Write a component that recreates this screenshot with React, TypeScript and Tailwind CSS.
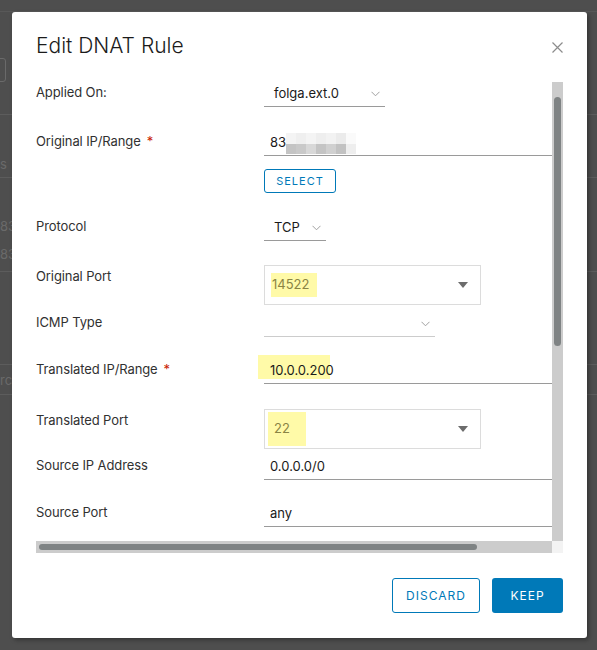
import type { ReactNode } from "react";

const font = { fontFamily: "Inter, 'Noto Sans', sans-serif" };

function Chevron() {
  return (
    <svg width="9" height="6" viewBox="0 0 9 6" className="shrink-0">
      <path d="M0.5 0.8l4 4 4-4" fill="none" stroke="#a0a0a0" strokeWidth="1" />
    </svg>
  );
}

function Caret() {
  return (
    <svg width="10" height="6" viewBox="0 0 10 6" className="shrink-0">
      <path d="M0 0h10L5 6z" fill="#6c6c6c" />
    </svg>
  );
}

function Row({ label, required, labelPad = "pt-[1px]", children }: { label: string; required?: boolean; labelPad?: string; children: ReactNode }) {
  return (
    <div className="flex items-start">
      <div className={`w-[228px] shrink-0 text-[13px] leading-[18px] tracking-[-0.1px] text-[#313131] ${labelPad}`}>
        {label}
        {required && <span className="ml-[6px] text-[#c92100]">*</span>}
      </div>
      <div className="flex flex-col">{children}</div>
    </div>
  );
}

function Select({ value, width, muted }: { value: string; width: string; muted?: boolean }) {
  return (
    <div className={`flex h-[25px] items-center justify-between border-b pl-[10px] pr-[5px] ${width} ${muted ? "border-[#cccccc]" : "border-[#9a9a9a]"}`}>
      <span className="text-[13px] text-[#1a1a1a]">{value}</span>
      <Chevron />
    </div>
  );
}

function TextInput({ children }: { children: ReactNode }) {
  return (
    <div className="flex h-[25px] w-[300px] items-center border-b border-[#9a9a9a] pl-[6px] text-[13px] text-[#1a1a1a]">
      {children}
    </div>
  );
}

function Combo({ value, hl }: { value: string; hl: string }) {
  return (
    <div className="flex h-[40px] w-[217px] items-center justify-between border border-[#dcdcdc] pl-[1px] pr-[12px]">
      <span className={`flex items-center bg-[#fffaa8] text-[13px] text-[#8a8444] ${hl}`}>{value}</span>
      <Caret />
    </div>
  );
}

function Mosaic() {
  const top = ["#f4f4f4", "#efefef", "#f4f4f4", "#eeeeee", "#f2f2f2", "#ebebeb", "#fafafa"];
  const bottom = ["#c4c4c4", "#c9c9c9", "#d8d8d8", "#c4c4c4", "#d0d0d0", "#c2c2c2", "#eeeeee"];
  return (
    <div className="flex flex-col">
      <div className="flex">
        {top.map((c, i) => (
          <span key={i} className="h-[11px] w-[10px]" style={{ background: c }} />
        ))}
      </div>
      <div className="flex">
        {bottom.map((c, i) => (
          <span key={i} className="h-[10px] w-[10px]" style={{ background: c }} />
        ))}
      </div>
    </div>
  );
}

function Backdrop() {
  return (
    <div className="flex h-full flex-col text-[13px] text-[#6a6a6a]">
      <div className="h-[12px] border-b border-[#585858]" />
      <div className="ml-[-20px] mt-[46px] h-[24px] w-[26px] rounded-[3px] border border-[#6a6a6a]" />
      <div className="h-[33px] border-b border-[#5c5c5c]" />
      <div className="flex h-[63px] items-end border-b border-[#5c5c5c] pb-[3px]">s</div>
      <div className="h-[34px]" />
      <div className="h-[28px] leading-[28px]">83</div>
      <div className="h-[32px] border-b border-[#5c5c5c] leading-[28px]">83</div>
      <div className="h-[93px] border-b border-[#5c5c5c]" />
      <div className="h-[30px] border-b border-[#5c5c5c] leading-[30px]">rce</div>
    </div>
  );
}

export default function App() {
  return (
    <div className="relative h-[650px] w-[597px] overflow-hidden bg-[#4e4e4e]" style={font}>
      <Backdrop />

      <div className="absolute inset-0 pb-3 pl-3 pr-[10px] pt-3">
        <div className="flex h-full flex-col rounded-[3px] bg-white pl-6 pr-6 shadow-[2px_2px_4px_rgba(0,0,0,0.35)]">
          <div className="flex items-center justify-between pt-5">
            <h1 className="text-[21px] font-light leading-[28px] text-[#1b1b1b]">Edit DNAT Rule</h1>
            <svg width="11" height="11" viewBox="0 0 11 11" className="mt-[2px]">
              <path d="M0.5 0.5l10 10M10.5 0.5l-10 10" stroke="#8c8c8c" strokeWidth="1.2" />
            </svg>
          </div>

          <div className="mt-[22px] flex flex-col">
            <div className="flex h-[459px]">
              <div className="w-[516px] overflow-hidden">
                <div className="flex w-[600px] flex-col">
                  <Row label="Applied On:">
                    <Select value="folga.ext.0" width="w-[121px]" />
                  </Row>

                  <div className="mt-[24px]">
                    <Row label="Original IP/Range" required>
                      <TextInput>
                        <span>83</span>
                        <Mosaic />
                      </TextInput>
                      <button className="mt-[13px] flex h-[24px] w-[72px] items-center justify-center rounded-[3px] border border-[#0079b8] text-[11px] tracking-[1px] text-[#0079b8]">
                        SELECT
                      </button>
                    </Row>
                  </div>

                  <div className="mt-[23px]">
                    <Row label="Protocol">
                      <Select value="TCP" width="w-[62px]" />
                    </Row>
                  </div>

                  <div className="mt-[24px]">
                    <Row label="Original Port" labelPad="pt-[2px]">
                      <Combo value="14522" hl="ml-[5px] h-[24px] w-[46px] pl-[1px]" />
                    </Row>
                  </div>

                  <div className="mt-[7px]">
                    <Row label="ICMP Type">
                      <Select value="" width="w-[171px]" muted />
                    </Row>
                  </div>

                  <div className="mt-[22px]">
                    <Row label="Translated IP/Range" required>
                      <TextInput>
                        <span className="relative">
                          <span className="absolute left-[-12px] top-[-6px] h-[24px] w-[72px] bg-[#fffaa8]" />
                          <span className="relative">10.0.0.200</span>
                        </span>
                      </TextInput>
                    </Row>
                  </div>

                  <div className="mt-[25px]">
                    <Row label="Translated Port" labelPad="pt-[2px]">
                      <Combo value="22" hl="ml-[2px] h-[34px] w-[38px] pl-[6px]" />
                    </Row>
                  </div>

                  <div className="mt-[6px]">
                    <Row label="Source IP Address">
                      <TextInput>0.0.0.0/0</TextInput>
                    </Row>
                  </div>

                  <div className="mt-[22px]">
                    <Row label="Source Port">
                      <TextInput>any</TextInput>
                    </Row>
                  </div>
                </div>
              </div>

              <div className="flex w-[11px] flex-col bg-[#cccccc] px-[2px] pt-[15px]">
                <div className="h-[249px] rounded-full bg-[#7f8384]" />
              </div>
            </div>

            <div className="flex h-[12px]">
              <div className="flex w-[516px] items-center bg-[#cccccc] pl-[3px]">
                <div className="h-[6px] w-[438px] rounded-full bg-[#7f8384]" />
              </div>
              <div className="w-[11px] bg-[#f3f3f3]" />
            </div>
          </div>

          <div className="mt-[25px] flex justify-end gap-3">
            <button className="flex h-[35px] w-[88px] items-center justify-center rounded-[3px] border border-[#0079b8] text-[12px] tracking-[1px] text-[#0079b8]">
              DISCARD
            </button>
            <button className="flex h-[35px] w-[71px] items-center justify-center rounded-[3px] bg-[#0079b8] text-[12px] tracking-[1px] text-white">
              KEEP
            </button>
          </div>
        </div>
      </div>
    </div>
  );
}
